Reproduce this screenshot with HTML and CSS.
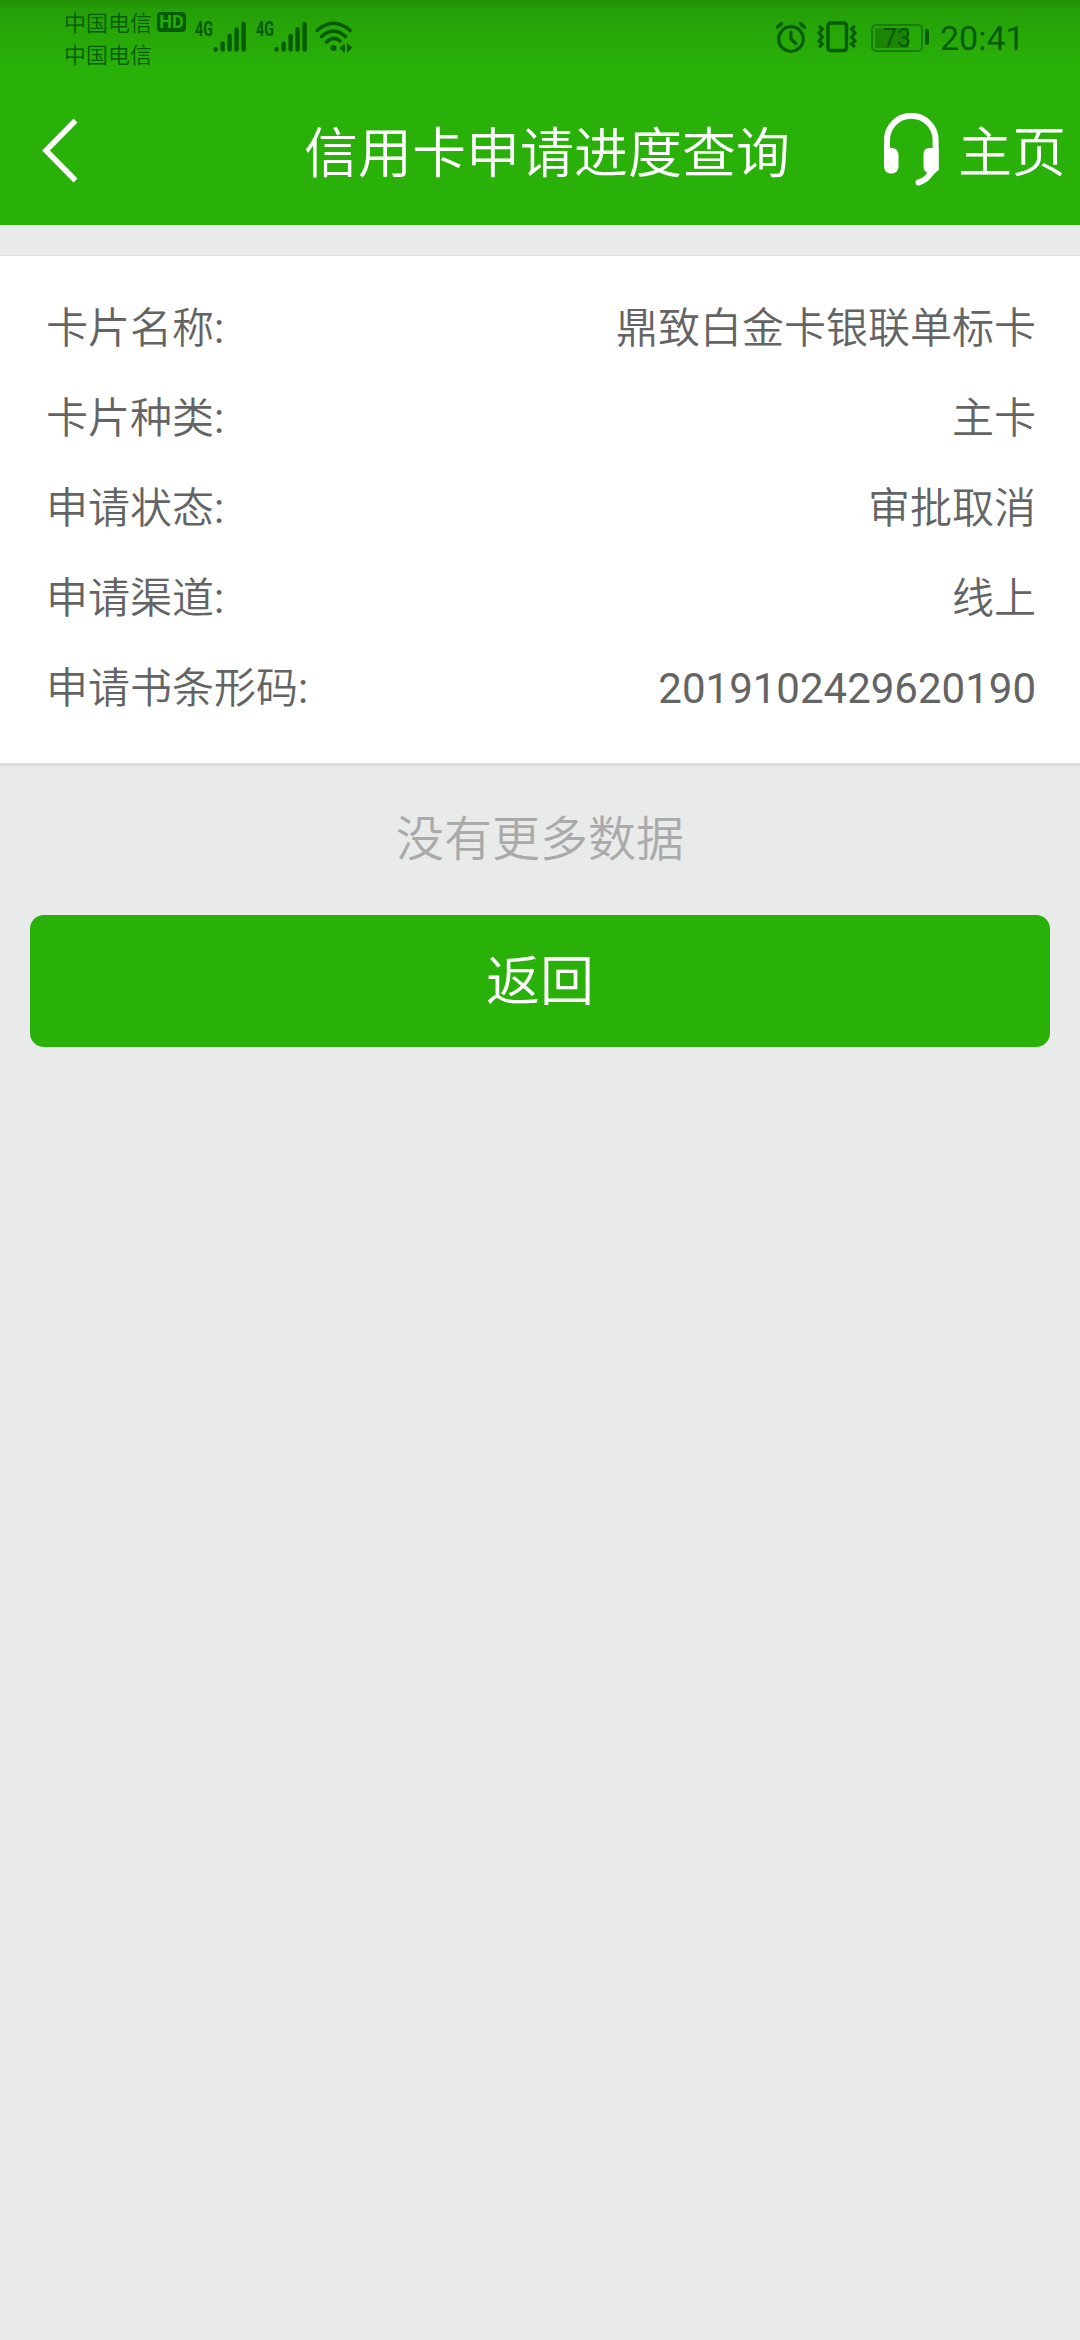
FILE: index.html
```html
<!DOCTYPE html>
<html lang="zh-CN">
<head>
<meta charset="utf-8">
<title>信用卡申请进度查询</title>
<link rel="stylesheet" href="styles.css">
</head>
<body>
<header class="header">
  <div class="status">
    <div class="carriers">
      <div class="carrier">中国电信<span class="hd">HD</span></div>
      <div class="carrier">中国电信</div>
    </div>
    <div class="signal">
      <span class="net">4G</span>
      <svg width="33" height="32" viewBox="0 0 33 32"><g stroke="currentColor" stroke-width="4.4" stroke-linecap="round"><path d="M2.6 28.500v-.4M9.6 28.500v-6M16.6 28.500V15M23.6 28.500V8.500M30.6 28.500V3"/></g></svg>
    </div>
    <div class="signal">
      <span class="net">4G</span>
      <svg width="33" height="32" viewBox="0 0 33 32"><g stroke="currentColor" stroke-width="4.4" stroke-linecap="round"><path d="M2.6 28.500v-.4M9.6 28.500v-6M16.6 28.500V15M23.6 28.500V8.500M30.6 28.500V3"/></g></svg>
    </div>
    <svg class="wifi" width="38" height="32" viewBox="0 0 38 32"><g fill="none" stroke="currentColor" stroke-width="3.6" stroke-linecap="round"><path d="M2.2 9.300Q18.500-4.800 35 9.300M6.500 15.500Q18.500 4.600 30.500 15.500M11.500 21Q18.500 14.500 25 20"/></g><circle cx="18.500" cy="27" r="3" fill="currentColor"/><path d="M24.500 27l3.500-3v6zM33.500 23.500l4 3-4 3.500zM28 23.500h2v8h-2zM32 23h1.800v8H32z" fill="currentColor"/></svg>
    <div class="status-right">
      <svg width="32" height="32" viewBox="0 0 32 32"><g fill="none" stroke="currentColor" stroke-width="3.200" stroke-linecap="round"><circle cx="16" cy="18" r="12.300"/><path d="M2.300 6.300l4.200-3.800M29.500 6.300l-4.200-3.800M16 11v7l4.700 4.500"/></g></svg>
      <svg class="vibrate" width="40" height="32" viewBox="0 0 40 32"><g fill="none" stroke="currentColor"><rect x="11" y="2" width="18.500" height="27.500" rx="2.500" stroke-width="3.400"/><path d="M2 5l3.500 3-3.500 4 3.500 4-3.500 4 3.500 3-3.500 3M38 5l-3.500 3 3.500 4-3.500 4 3.500 4-3.500 3 3.500 3" stroke-width="3"/></g></svg>
      <div class="battery"><span class="charge"></span><span class="percent">73</span></div>
      <span class="battery-cap"></span>
      <span class="clock">20:41</span>
    </div>
  </div>
  <nav class="bar">
    <svg class="back" width="40" height="64" viewBox="0 0 40 64"><path d="M35.500 1.500L6 31.500 35.500 61.500" fill="none" stroke="currentColor" stroke-width="5.500"/></svg>
    <h1 class="title">信用卡申请进度查询</h1>
    <div class="actions">
      <svg class="headset" width="56" height="74" viewBox="0 0 56 74"><g fill="none" stroke="currentColor" stroke-width="6"><path d="M4 42V27a24.300 24.300 0 0 1 48.600 0v30"/><path d="M50 56Q45 67 35.500 69.500" stroke-linecap="round"/></g><rect x="1" y="35" width="14.500" height="25.500" rx="6.500" fill="currentColor"/><path d="M46.500 35H55.500V57L50 62 45.500 60Q40.500 59 40.500 53V41Q40.500 35 46.500 35" fill="currentColor"/></svg>
      <span class="home">主页</span>
    </div>
  </nav>
</header>
<main>
  <dl class="card">
    <div class="row"><dt>卡片名称<span class="colon">:</span></dt><dd>鼎致白金卡银联单标卡</dd></div>
    <div class="row"><dt>卡片种类<span class="colon">:</span></dt><dd>主卡</dd></div>
    <div class="row"><dt>申请状态<span class="colon">:</span></dt><dd>审批取消</dd></div>
    <div class="row"><dt>申请渠道<span class="colon">:</span></dt><dd>线上</dd></div>
    <div class="row"><dt>申请书条形码<span class="colon">:</span></dt><dd class="number">2019102429620190</dd></div>
  </dl>
  <p class="no-more">没有更多数据</p>
  <button class="return" type="button">返回</button>
</main>
</body>
</html>
```
FILE: styles.css
```css
* { box-sizing: border-box; }
body {
  margin: 0;
  min-height: 2340px;
  background: #e8ebea;
  color: #646464;
  font-family: Roboto, "Noto Sans CJK SC", sans-serif;
  font-weight: 350;
}
svg { display: block; flex: none; }
.header {
  height: 225px;
  background: linear-gradient(#229106 0, #25a008 10px, #29b009 65px);
  color: #fff;
}
.status {
  display: flex;
  height: 75px;
  padding: 0 57px 0 64px;
  color: #075c03;
}
.carriers { width: 131px; padding-top: 5px; }
.carrier {
  display: flex;
  align-items: center;
  gap: 5px;
  height: 32px;
  font-size: 22px;
}
.hd {
  width: 29px;
  height: 20px;
  margin-top: 1px;
  border-radius: 4px;
  background: currentColor;
  font-size: 18px;
  line-height: 20px;
  font-weight: 700;
  text-align: center;
}
.hd::first-line { color: #28ab08; }
.signal { display: flex; width: 61px; padding-top: 21px; }
.net {
  width: 18px;
  font-size: 20px;
  line-height: 17px;
  font-weight: 700;
  transform: scaleX(.72);
  transform-origin: left;
}
.wifi { margin-top: 21px; margin-left: -2px; }
.status-right { display: flex; margin-left: auto; padding-top: 21px; }
.vibrate { margin-left: 10px; }
.battery {
  position: relative;
  width: 52px;
  height: 28px;
  margin: 3px 0 0 14px;
  border: 2px solid #1a7e06;
  border-radius: 5px;
  text-align: center;
}
.charge {
  position: absolute;
  left: 2px;
  top: 2px;
  width: 34px;
  height: 20px;
  background: #1d8506;
}
.percent {
  position: relative;
  display: block;
  font-size: 25px;
  line-height: 25px;
  font-weight: 400;
}
.battery-cap {
  width: 4px;
  height: 16px;
  margin: 8px 0 0 2px;
  border-radius: 2px;
  background: currentColor;
}
.clock {
  width: 83px;
  margin-left: 11px;
  font-size: 34px;
  line-height: 34px;
  font-weight: 400;
  white-space: nowrap;
}
.bar {
  display: grid;
  grid-template-columns: 304px 486px 1fr;
  align-items: center;
  height: 150px;
}
.back { margin: 2px 0 0 40px; }
.title {
  margin: 0;
  padding-top: 9px;
  font-size: 54px;
  line-height: 80px;
  font-weight: inherit;
  white-space: nowrap;
}
.actions {
  display: flex;
  align-items: center;
  justify-content: flex-end;
  padding-right: 14px;
}
.headset { margin-right: 19px; }
.home { padding-top: 8px; font-size: 54px; line-height: 80px; }
.card {
  height: 511px;
  margin: 30px 0 0;
  padding: 23px 44px 0 46px;
  border-top: 1px solid #dcdfde;
  border-bottom: 3px solid #dcdedd;
  background: #fff;
}
.row {
  display: flex;
  justify-content: space-between;
  align-items: center;
  height: 90px;
  font-size: 42px;
}
dd { margin: 0; }
.colon { font-weight: 400; }
.number { padding-top: 8px; font-weight: 400; }
.no-more {
  margin: 0;
  height: 149px;
  color: #aaa;
  font-size: 48px;
  line-height: 147px;
  text-align: center;
}
.return {
  display: block;
  width: 1020px;
  height: 132px;
  margin: 0 auto;
  padding: 0 0 8px;
  border: 0;
  border-radius: 14px;
  background: #29b009;
  color: #fff;
  font: inherit;
  font-size: 54px;
}
```
